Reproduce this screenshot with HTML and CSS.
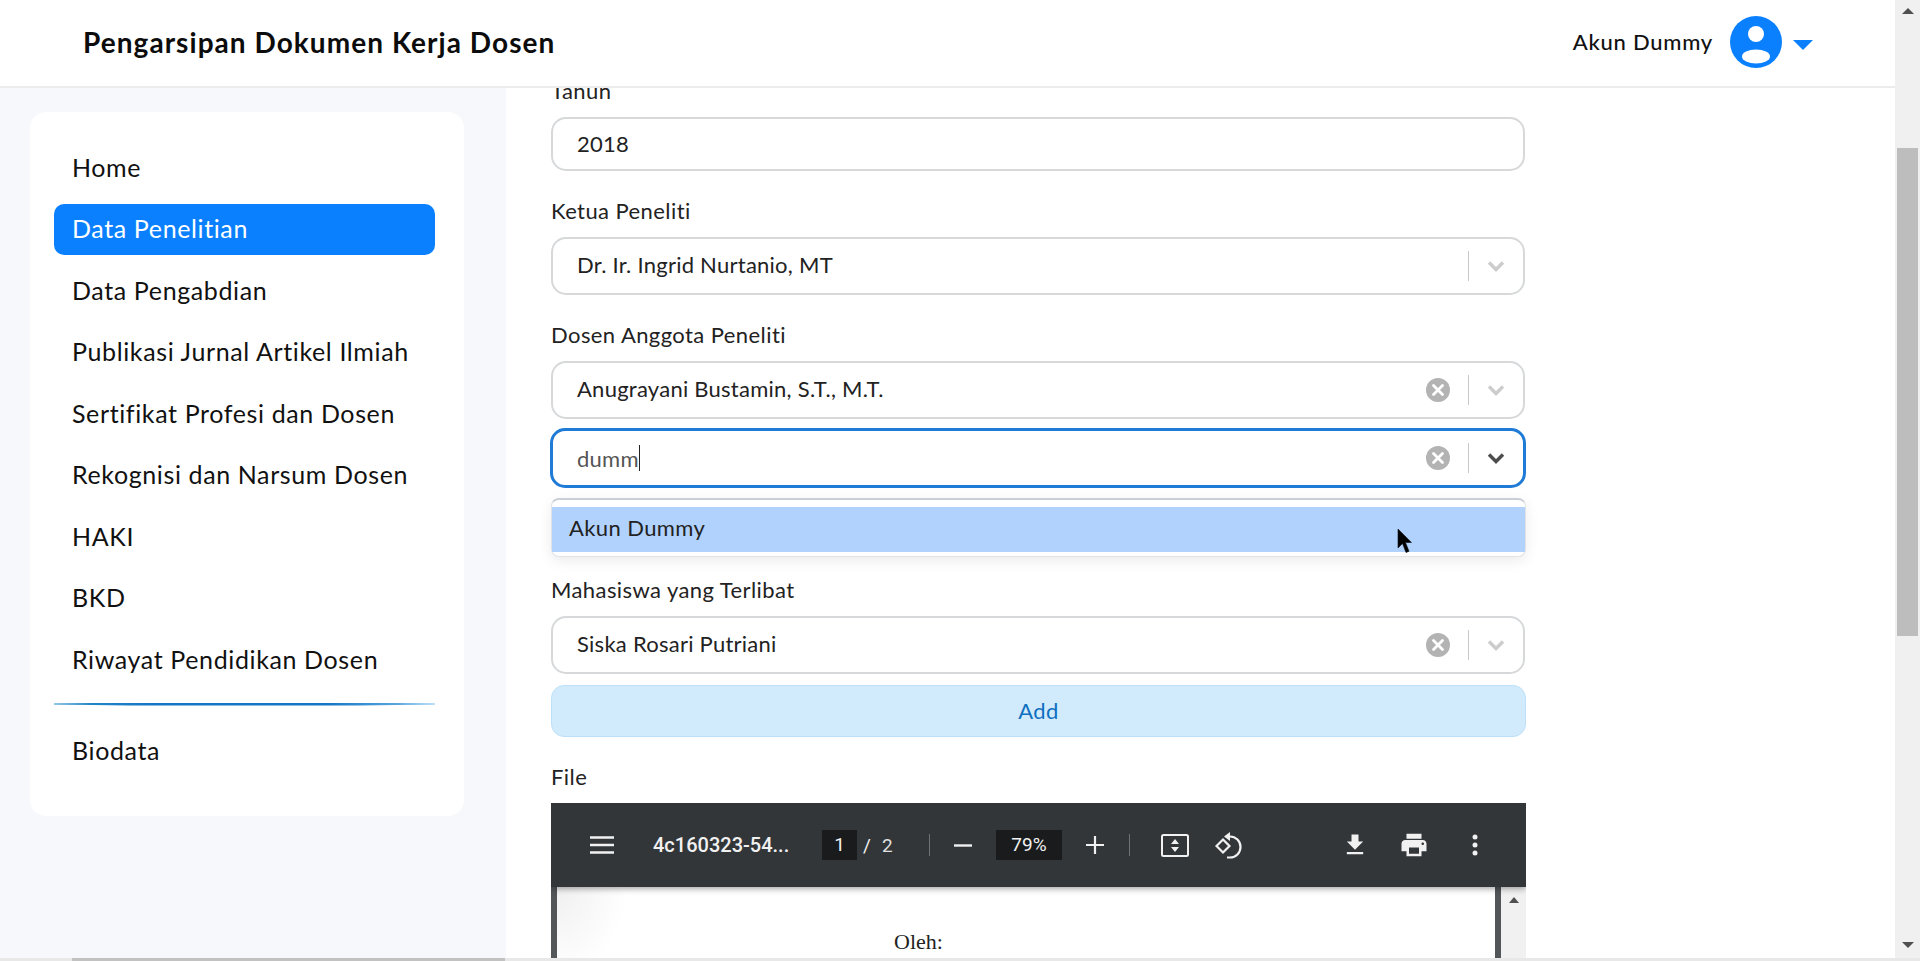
FILE: index.html
```html
<!DOCTYPE html>
<html lang="id">
<head>
<meta charset="utf-8">
<title>Pengarsipan Dokumen Kerja Dosen</title>
<link rel="stylesheet" href="styles.css">
</head>
<body>
<div class="window">
  <div class="viewport">
    <div class="page">
      <header class="topbar">
        <div class="brand">Pengarsipan Dokumen Kerja Dosen</div>
        <div class="account">
          <span class="account-name">Akun Dummy</span>
          <svg class="avatar" width="52" height="52" viewBox="0 0 52 52"><circle cx="26" cy="26" r="26" fill="#0a80ff"/><circle cx="26" cy="18" r="8" fill="#fff"/><ellipse cx="26" cy="40.500" rx="14" ry="7" fill="#fff"/></svg>
          <span class="caret"></span>
        </div>
      </header>
      <div class="content">
        <aside class="sidebar">
          <nav class="card">
            <a class="nav-item">Home</a>
            <a class="nav-item active">Data Penelitian</a>
            <a class="nav-item">Data Pengabdian</a>
            <a class="nav-item">Publikasi Jurnal Artikel Ilmiah</a>
            <a class="nav-item">Sertifikat Profesi dan Dosen</a>
            <a class="nav-item">Rekognisi dan Narsum Dosen</a>
            <a class="nav-item">HAKI</a>
            <a class="nav-item">BKD</a>
            <a class="nav-item">Riwayat Pendidikan Dosen</a>
            <div class="nav-divider"></div>
            <a class="nav-item">Biodata</a>
          </nav>
        </aside>
        <main class="main">
          <form class="form">
            <label class="label">Tahun</label>
            <div class="field input-field">2018</div>

            <label class="label gap-top">Ketua Peneliti</label>
            <div class="field select">
              <span class="value">Dr. Ir. Ingrid Nurtanio, MT</span>
              <span class="sep"></span>
              <svg class="chev" width="18" height="12" viewBox="0 0 18 12"><path d="M2 2.5l7 7 7-7" fill="none" stroke="#ccc" stroke-width="3.400"/></svg>
            </div>

            <label class="label gap-top">Dosen Anggota Peneliti</label>
            <div class="field select">
              <span class="value">Anugrayani Bustamin, S.T., M.T.</span>
              <svg class="clear" width="24" height="24" viewBox="0 0 24 24"><circle cx="12" cy="12" r="12" fill="#b3b3b3"/><path d="M7.5 7.5l9 9M16.500 7.500l-9 9" stroke="#fff" stroke-width="2.800" stroke-linecap="round"/></svg>
              <span class="sep"></span>
              <svg class="chev" width="18" height="12" viewBox="0 0 18 12"><path d="M2 2.5l7 7 7-7" fill="none" stroke="#ccc" stroke-width="3.400"/></svg>
            </div>
            <div class="combo">
              <div class="field select focused">
                <span class="value typed">dumm<span class="text-caret"></span></span>
                <svg class="clear" width="24" height="24" viewBox="0 0 24 24"><circle cx="12" cy="12" r="12" fill="#b3b3b3"/><path d="M7.5 7.5l9 9M16.500 7.500l-9 9" stroke="#fff" stroke-width="2.800" stroke-linecap="round"/></svg>
                <span class="sep"></span>
                <svg class="chev" width="18" height="12" viewBox="0 0 18 12"><path d="M2 2.500l7 7 7-7" fill="none" stroke="#4d4d4d" stroke-width="3.400"/></svg>
              </div>
              <div class="menu">
                <div class="option">Akun Dummy</div>
                <svg class="pointer" width="15" height="27" viewBox="0 0 15 27"><path d="M1 1v19l4.500-4.500 3.500 9 3-1.200-3.500-8.800h6z" fill="#000" stroke="#111" stroke-width=".6"/></svg>
              </div>
            </div>

            <label class="label student">Mahasiswa yang Terlibat</label>
            <div class="field select">
              <span class="value">Siska Rosari Putriani</span>
              <svg class="clear" width="24" height="24" viewBox="0 0 24 24"><circle cx="12" cy="12" r="12" fill="#b3b3b3"/><path d="M7.5 7.5l9 9M16.500 7.500l-9 9" stroke="#fff" stroke-width="2.800" stroke-linecap="round"/></svg>
              <span class="sep"></span>
              <svg class="chev" width="18" height="12" viewBox="0 0 18 12"><path d="M2 2.5l7 7 7-7" fill="none" stroke="#ccc" stroke-width="3.400"/></svg>
            </div>
            <button class="add" type="button">Add</button>

            <label class="label file-label">File</label>
            <div class="pdf">
              <div class="pdf-bar">
                <svg class="pdf-menu" width="24" height="18" viewBox="0 0 24 18"><path d="M0 1.500h24M0 9h24M0 16.500h24" stroke="#f1f1f1" stroke-width="2.400"/></svg>
                <span class="pdf-name">4c160323-54...</span>
                <span class="pdf-input">1</span>
                <span class="pdf-slash">/</span>
                <span class="pdf-total">2</span>
                <span class="pdf-sep first"></span>
                <svg class="pdf-minus" width="18" height="3" viewBox="0 0 18 3"><path d="M0 1.500h18" stroke="#f1f1f1" stroke-width="2.400"/></svg>
                <span class="pdf-zoom">79%</span>
                <svg class="pdf-plus" width="18" height="18" viewBox="0 0 18 18"><path d="M0 9h18M9 0v18" stroke="#f1f1f1" stroke-width="2.200"/></svg>
                <span class="pdf-sep second"></span>
                <svg class="pdf-fit" width="28" height="23" viewBox="0 0 28 23"><rect x="1" y="1" width="26" height="21" rx="1.500" fill="none" stroke="#f1f1f1" stroke-width="2"/><path d="M14 5l4 5h-8zM14 18l4-5h-8z" fill="#f1f1f1"/></svg>
                <svg class="pdf-rotate" width="28" height="27" viewBox="0 0 28 27"><path d="M8 7.500l6.500 6.500-6.500 6.500-6.500-6.500z" fill="none" stroke="#f1f1f1" stroke-width="2.200"/><path d="M12 4.500h3a10.500 10.500 0 0 1 0 21h-3" fill="none" stroke="#f1f1f1" stroke-width="2.200"/><path d="M15 0v9l-6-4.500z" fill="#f1f1f1"/></svg>
                <svg class="pdf-download" width="28" height="28" viewBox="0 0 24 24"><path d="M19 9h-4V3H9v6H5l7 7 7-7zM5 18v2h14v-2H5z" fill="#f1f1f1"/></svg>
                <svg class="pdf-print" width="30" height="30" viewBox="0 0 24 24"><path d="M19 8H5c-1.660 0-3 1.340-3 3v6h4v4h12v-4h4v-6c0-1.660-1.340-3-3-3zm-3 11H8v-5h8v5zm3-7c-.550 0-1-.450-1-1s.450-1 1-1 1 .450 1 1-.450 1-1 1zm-1-9H6v4h12V3z" fill="#f1f1f1"/></svg>
                <svg class="pdf-more" width="6" height="22" viewBox="0 0 6 22"><circle cx="3" cy="3" r="2.500" fill="#f1f1f1"/><circle cx="3" cy="11" r="2.500" fill="#f1f1f1"/><circle cx="3" cy="19" r="2.500" fill="#f1f1f1"/></svg>
              </div>
              <div class="pdf-body">
                <div class="pdf-page"><span class="oleh">Oleh:</span></div>
                <div class="pdf-scroll"><span class="arrow-up small"></span></div>
              </div>
            </div>
          </form>
        </main>
      </div>
    </div>
    <div class="vscroll">
      <span class="arrow-up"></span>
      <div class="vthumb"></div>
      <span class="arrow-down"></span>
    </div>
  </div>
  <div class="hscroll"><div class="hthumb"></div></div>
</div>
</body>
</html>
```

FILE: styles.css
```css
* { box-sizing: border-box; }
html, body { margin: 0; padding: 0; height: 100%; overflow: hidden; background: #fff; }
body { font-family: "Lato", "Noto Sans", sans-serif; color: #111; }

.window { width: 1920px; height: 961px; display: flex; flex-direction: column; overflow: hidden; }
.viewport { flex: 1; display: flex; min-height: 0; }
.page { flex: 1; display: flex; flex-direction: column; min-width: 0; }

/* scrollbars */
.vscroll { width: 25px; background: #f0f0f0; display: flex; flex-direction: column; align-items: center; }
.arrow-up, .arrow-down { display: block; width: 0; height: 0; border-left: 6px solid transparent; border-right: 6px solid transparent; }
.arrow-up { border-bottom: 6px solid #505050; margin-top: 8px; }
.arrow-down { border-top: 6px solid #505050; margin-top: 306px; }
.arrow-up.small { border-left-width: 5.5px; border-right-width: 5.5px; border-bottom-width: 6px; margin-top: 10px; }
.vthumb { width: 21px; height: 488px; margin-top: 134px; background: #bdbdbd; }
.hscroll { height: 3px; background: #e8e8e8; flex: none; padding-left: 72px; }
.hthumb { width: 433px; height: 3px; background: #c2c2c2; }

/* header */
.topbar { height: 88px; flex: none; background: #fff; border-bottom: 2px solid #ececec; display: flex; align-items: center; justify-content: space-between; padding: 0 82px 2px 83px; position: relative; z-index: 2; }
.brand { font-size: 28px; font-weight: 700; letter-spacing: 1.05px; color: #0c0c0c; }
.account { display: flex; align-items: center; }
.account-name { font-size: 22px; font-weight: 500; letter-spacing: .75px; color: #111; padding-bottom: 1px; }
.avatar { margin-left: 17px; }
.caret { width: 0; height: 0; margin-left: 11px; margin-top: 6px; border-left: 10px solid transparent; border-right: 10px solid transparent; border-top: 10px solid #0a80ff; }

/* layout */
.content { flex: 1; display: flex; min-height: 0; }
.sidebar { width: 506px; flex: none; background: #f6f8fb; padding: 24px 0 0 30px; }
.card { width: 434px; height: 704px; background: #fff; border-radius: 16px; padding: 30px 29px 0 24px; display: flex; flex-direction: column; gap: 10.500px; }
.nav-item { height: 51px; flex: none; display: flex; align-items: center; padding: 0 0 2px 18px; border-radius: 10px; font-size: 25px; letter-spacing: .62px; color: #111; }
.nav-item.active { background: #0a80ff; color: #fff; }
.nav-divider { height: 3px; margin: 7px 0 9px; flex: none; background: linear-gradient(90deg, #2a8fc9 0%, #1677c6 25%, #1677c6 72%, #7cc0ea 100%); clip-path: polygon(0 33%, 20% 0, 80% 0, 100% 33%, 100% 67%, 80% 100%, 20% 100%, 0 67%); }

/* form */
.main { flex: 1; background: #fff; overflow: hidden; padding-left: 45px; min-width: 0; }
.form { width: 975px; margin-top: -9px; display: flex; flex-direction: column; }
.label { display: block; height: 24px; line-height: 24px; margin-bottom: 14px; font-size: 22px; letter-spacing: .42px; color: #222; }
.gap-top { margin-top: 28px; }
.label.student { margin-top: 90px; }
.label.file-label { margin-top: 29px; margin-bottom: 13px; line-height: 22px; }
.field { border: 2px solid #d6d8da; border-radius: 15px; background: #fff; font-size: 22px; letter-spacing: .25px; color: #222; display: flex; align-items: center; flex: none; margin-right: 1px; }
.input-field { height: 54px; padding: 0 0 1px 24px; }
.select { height: 58px; padding: 0 0 0 24px; }
.select + .combo { margin-top: 9px; }
.value { flex: 1; white-space: nowrap; padding-bottom: 3px; }
.typed { color: #555; display: flex; align-items: center; padding-bottom: 0; }
.text-caret { display: inline-block; width: 1px; height: 26px; background: #222; }
.clear { margin-right: 18px; flex: none; }
.sep { width: 1px; height: 30px; background: #c9c9c9; flex: none; }
.chev { flex: none; margin: 0 18px 0 18px; }
.combo { position: relative; margin: 0 0 0 -1px; }
.select.focused { height: 60px; border: 3.500px solid #1f7bd6; padding-left: 24px; margin-right: 0; }
.select.focused .chev { margin-right: 18px; }
.select.focused .sep { margin-left: 0; }
.menu { position: absolute; left: 1px; right: 0; top: 70px; height: 59px; padding: 7px 0 6px; border: 1px solid #dfe3e6; border-top: 2px solid #c9cfd4; border-radius: 8px; background: #fff; box-shadow: 0 4px 14px rgba(0,0,0,.08); z-index: 3; }
.option { height: 45px; display: flex; align-items: center; padding: 0 0 4px 17px; background: #b1d2fc; font-size: 22px; letter-spacing: .4px; color: #222; }
.pointer { position: absolute; left: 845px; top: 28px; }
.add { height: 52px; margin-top: 11px; flex: none; border: 1px solid #bde0f8; border-radius: 13px; background: #d1eafc; color: #0c6fc0; font: inherit; font-size: 22px; letter-spacing: .4px; padding: 0 0 2px; cursor: pointer; }

/* pdf viewer */
.pdf { height: 155px; flex: none; display: flex; flex-direction: column; overflow: hidden; }
.pdf-bar { height: 84px; flex: none; background: #323639; display: flex; align-items: center; color: #f1f1f1; position: relative; z-index: 1; box-shadow: 0 2px 6px rgba(0,0,0,.35); font-family: "Roboto", sans-serif; }
.pdf-menu { margin-left: 39px; flex: none; }
.pdf-name { margin-left: 39px; width: 137px; font-size: 20px; font-weight: 500; white-space: nowrap; }
.pdf-input { margin-left: 32px; width: 35px; height: 30px; background: #191b1c; text-align: center; line-height: 30px; font-size: 19px; }
.pdf-slash { margin-left: 6px; width: 14px; font-size: 19px; }
.pdf-total { margin-left: 5px; width: 14px; font-size: 19px; color: #e0e0e0; }
.pdf-sep { width: 1px; height: 22px; background: #6f7275; flex: none; }
.pdf-sep.first { margin-left: 33px; }
.pdf-minus { margin-left: 24px; flex: none; }
.pdf-zoom { margin-left: 24px; width: 66px; height: 30px; background: #191b1c; text-align: center; line-height: 30px; font-size: 19px; }
.pdf-plus { margin-left: 24px; flex: none; }
.pdf-sep.second { margin-left: 25px; }
.pdf-fit { margin-left: 31px; flex: none; }
.pdf-rotate { margin-left: 26px; flex: none; }
.pdf-download { margin-left: 98px; flex: none; }
.pdf-print { margin-left: 30px; flex: none; }
.pdf-more { margin-left: 43px; flex: none; }
.pdf-body { flex: 1; display: flex; background: #525659; padding-left: 6px; min-height: 0; }
.pdf-page { width: 938px; background: radial-gradient(ellipse 70px 90px at 0 0, #f0f0f0, #fff 100%); display: block; }
.oleh { display: block; margin: 43px 0 0 337px; font-family: "Liberation Serif", serif; font-size: 22px; color: #222; line-height: 24px; }
.pdf-scroll { width: 25px; margin-left: 6px; background: #f1f1f1; display: flex; flex-direction: column; align-items: center; }
```
